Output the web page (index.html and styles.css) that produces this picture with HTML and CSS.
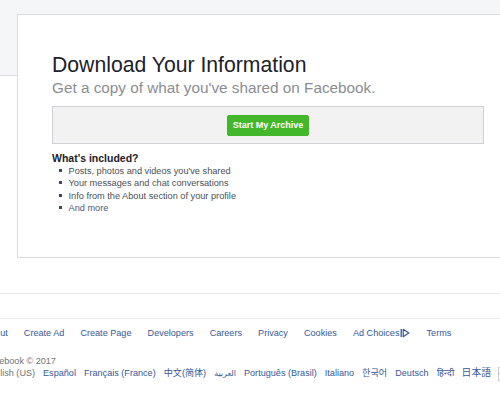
FILE: index.html
```html
<!DOCTYPE html>
<html lang="en">
<head>
<meta charset="utf-8">
<title>Download Your Information</title>
<link rel="stylesheet" href="styles.css">
</head>
<body>
<div class="page">
  <div class="stage">
    <section class="card">
      <h1 class="title">Download Your Information</h1>
      <p class="sub">Get a copy of what you've shared on Facebook.</p>
      <div class="action"><button class="btn" type="button">Start My Archive</button></div>
      <h2 class="inc">What's included?</h2>
      <ul class="list">
        <li>Posts, photos and videos you've shared</li>
        <li>Your messages and chat conversations</li>
        <li>Info from the About section of your profile</li>
        <li><a class="more" href="#">And more</a></li>
      </ul>
    </section>
  </div>
  <footer class="footer">
    <div class="bar"></div>
    <div class="foot-inner">
      <nav class="links">
        <a href="#">About</a>
        <a href="#">Create Ad</a>
        <a href="#">Create Page</a>
        <a href="#">Developers</a>
        <a href="#">Careers</a>
        <a href="#">Privacy</a>
        <a href="#">Cookies</a>
        <a href="#" class="adc">Ad Choices<svg class="adc-icon" width="10" height="10" viewBox="0 0 10 10"><path d="M1.2 1v8" stroke="#365899" stroke-width="1.3" fill="none"/><path d="M3.2 1.3L8.8 5L3.2 8.7Z" stroke="#365899" stroke-width="1.2" fill="none" stroke-linejoin="round"/></svg></a>
        <a href="#">Terms</a>
      </nav>
      <div class="copy">Facebook © 2017</div>
      <div class="langs">
        <span class="cur">English (US)</span>
        <a href="#">Español</a>
        <a href="#">Français (France)</a>
        <a href="#">中文(简体)</a>
        <a href="#" lang="ar">العربية</a>
        <a href="#">Português (Brasil)</a>
        <a href="#">Italiano</a>
        <a href="#" lang="ko">한국어</a>
        <a href="#">Deutsch</a>
        <a href="#" lang="hi">हिन्दी</a>
        <a href="#" lang="ja">日本語</a>
        <span class="plus">+</span>
      </div>
    </div>
  </footer>
</div>
</body>
</html>
```
FILE: styles.css
```css
html, body {
  margin: 0;
  width: 500px;
  height: 406px;
  overflow: hidden;
}
body {
  font-family: "Liberation Sans", Arial, "Noto Sans CJK SC", sans-serif;
  background: #fff;
  color: #1d2129;
}
a { text-decoration: none; color: #365899; }

.stage {
  height: 293px;
  box-sizing: border-box;
  padding: 14px 0 0 17px;
  background: linear-gradient(#f5f6f7 0 75px, #dddfe2 75px 76px, #fff 76px);
}
.card {
  width: 540px;
  height: 244px;
  box-sizing: border-box;
  border: 1px solid #dadde1;
  background: #fff;
  padding: 38px 0 0 34px;
}
.title {
  margin: 0;
  font-size: 21.2px;
  font-weight: normal;
  line-height: 24px;
  color: #1d2129;
}
.sub {
  margin: 2px 0 0;
  font-size: 15.3px;
  line-height: 18px;
  color: #8a8d91;
}
.action {
  margin-top: 9px;
  width: 432px;
  height: 38px;
  box-sizing: border-box;
  border: 1px solid #cfd1d4;
  background: #f2f2f2;
  display: flex;
  align-items: center;
  justify-content: center;
}
.btn {
  width: 82px;
  height: 21px;
  padding: 0;
  border: 1px solid #42b72a;
  border-radius: 2px;
  background: #42b72a;
  color: #fff;
  font-family: "Liberation Sans", Arial, sans-serif;
  font-weight: bold;
  font-size: 9px;
  line-height: 19px;
}
.inc {
  margin: 8.4px 0 0;
  font-size: 10.5px;
  line-height: 12px;
  font-weight: bold;
  color: #1d2129;
}
.list {
  list-style: none;
  margin: 0.5px 0 0;
  padding: 0;
  font-size: 9.2px;
  line-height: 12.5px;
  color: #4b4f56;
}
.list li::before {
  content: "";
  display: inline-block;
  width: 3px;
  height: 3px;
  background: #3b4a6b;
  vertical-align: 2px;
  margin: 0 6.5px 0 7px;
}
.list .more { color: #4b5b7f; }

.bar {
  height: 24px;
  border-top: 1px solid #e9eaed;
  border-bottom: 1px solid #e9eaed;
}
.foot-inner {
  margin-left: -16px;
  padding-top: 7.3px;
  font-size: 9.1px;
  white-space: nowrap;
}
.links {
  display: flex;
  gap: 16.1px;
  line-height: 14px;
}
.adc {
  display: inline-flex;
  align-items: center;
}
.adc-icon { margin-left: 1px; margin-top: -1px; }
.copy {
  margin-top: 16px;
  line-height: 11px;
  color: #737373;
}
.langs {
  display: flex;
  align-items: baseline;
  gap: 8px;
  line-height: 11px;
}
.langs .cur { color: #737373; }
.langs [lang="ko"] {
  font-family: "Noto Sans CJK KR", sans-serif;
}
.langs [lang="ja"] {
  font-family: "Noto Sans CJK JP", sans-serif;
  font-size: 9.8px;
}
.langs [lang="ar"] { font-family: "DejaVu Sans", sans-serif; font-size: 8px; }
.plus {
  display: inline-block;
  width: 20px;
  height: 14px;
  margin-left: -1px;
  box-sizing: border-box;
  border: 1px solid #ccd0d5;
  background: #f5f6f7;
  color: #4b4f56;
  text-align: center;
  line-height: 12px;
  align-self: center;
}
```
